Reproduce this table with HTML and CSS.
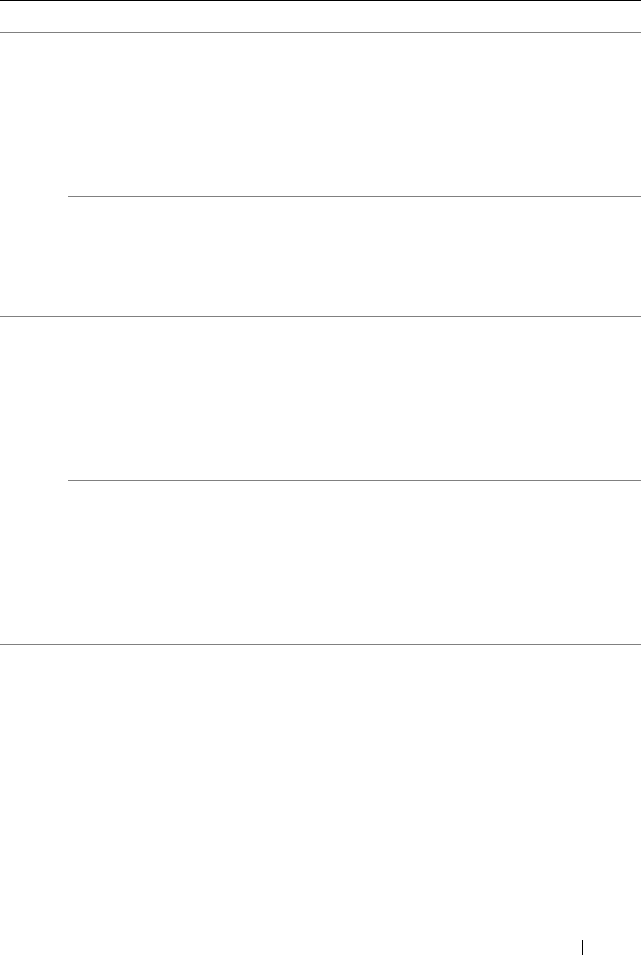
FILE: index.html
```html
<!DOCTYPE html>
<html>
<head>
<meta charset="utf-8">
<link rel="stylesheet" href="styles.css">
</head>
<body>
<div class="table">
  <div class="head"></div>
  <div class="group">
    <div class="label"></div>
    <div class="cells">
      <div class="cell c1"></div>
      <div class="cell c2 ruled"></div>
    </div>
  </div>
  <div class="group">
    <div class="label"></div>
    <div class="cells">
      <div class="cell c1"></div>
      <div class="cell c3 ruled"></div>
    </div>
  </div>
</div>
<div class="footer"><span class="bar"></span></div>
</body>
</html>
```
FILE: styles.css
```css
html, body {
  margin: 0;
  padding: 0;
  background: #fff;
  font-family: "Liberation Serif", serif;
}
.table {
  border-top: 1px solid #000;
}
.head {
  height: 31px;
  border-bottom: 1px solid #808080;
}
.group {
  display: grid;
  grid-template-columns: 68px 1fr;
  border-bottom: 1px solid #808080;
}
.cells {
  display: flex;
  flex-direction: column;
}
.cell.c1 { height: 163px; }
.cell.c2 { height: 119px; }
.cell.c3 { height: 163px; }
.ruled { border-top: 1px solid #808080; }
.footer {
  margin-top: 295px;
  padding-left: 582px;
  display: flex;
}
.bar {
  display: block;
  width: 1px;
  height: 15px;
  background: #000;
}
```
